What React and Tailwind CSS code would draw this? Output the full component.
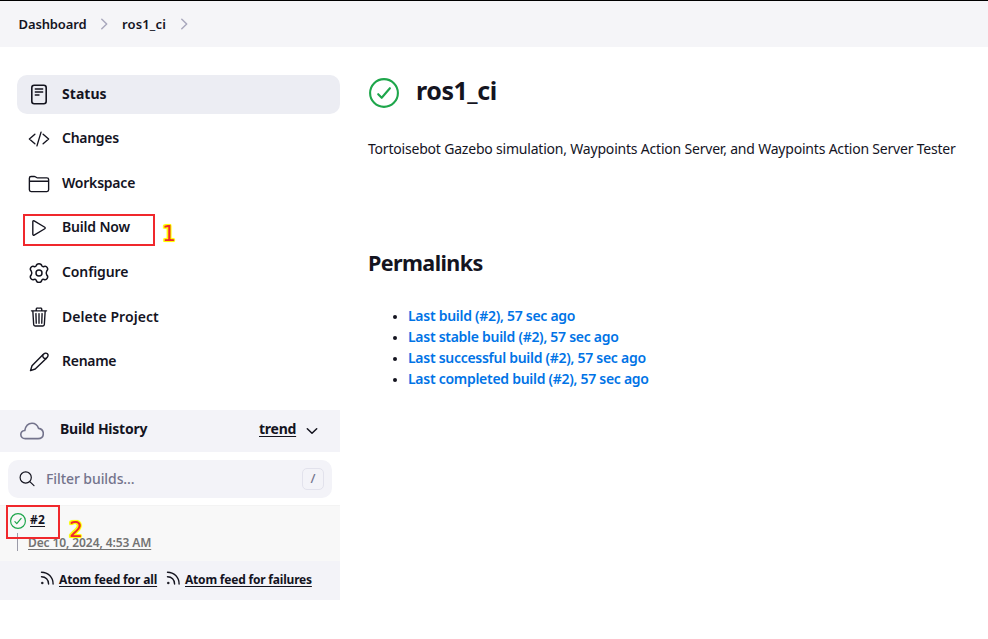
import React from "react";

const strokeProps = { fill: "none", stroke: "currentColor", strokeLinecap: "round", strokeLinejoin: "round" };

function Icon({ children, className = "w-[22px] h-[22px]", box = 512, sw = 32 }) {
  return (
    <svg viewBox={`0 0 ${box} ${box}`} className={`block shrink-0 ${className}`} {...strokeProps} strokeWidth={sw}>
      {children}
    </svg>
  );
}

const StatusIcon = () => (
  <Icon box={22} sw={1.6}>
    <rect x="3.800" y="1.300" width="14.400" height="18.400" rx="2.400" />
    <path d="M7.300 5h7.400M7.300 8h7.400M7.300 11h3.700" strokeWidth="1.400" />
  </Icon>
);
const CodeIcon = () => (
  <Icon>
    <path d="M160 368L32 256l128-112M352 368l128-112-128-112M304 96l-96 320" />
  </Icon>
);
const FolderIcon = () => (
  <Icon>
    <path d="M440 432H72a40 40 0 01-40-40V120a40 40 0 0140-40h75.89a40 40 0 0122.19 6.720l27.840 18.560a40 40 0 0022.190 6.720H440a40 40 0 0140 40v240a40 40 0 01-40 40zM32 192h448" />
  </Icon>
);
const PlayIcon = () => (
  <Icon>
    <path d="M112 111v290c0 17.440 17 28.520 31 20.160l247.900-148.370c12.120-7.250 12.120-26.330 0-33.580L143 90.840c-14-8.360-31 2.720-31 20.160z" />
  </Icon>
);
const GearIcon = () => (
  <Icon box={22} sw={1.45}>
    <circle cx="11" cy="11" r="3" />
    <path d="M8.200 3.900 C8.600 .9 13.400 .9 13.800 3.900 Q14.600 5 16 4.500 C18.800 3.500 21 7 18.700 9.100 Q17.700 11 18.700 12.900 C21 15 18.800 18.500 16 17.500 Q14.600 17 13.800 18.100 C13.400 21.100 8.600 21.100 8.200 18.100 Q7.400 17 6 17.500 C3.200 18.500 1 15 3.300 12.900 Q4.300 11 3.300 9.100 C1 7 3.200 3.500 6 4.500 Q7.400 5 8.200 3.900z" />
  </Icon>
);
const TrashIcon = () => (
  <Icon>
    <path d="M112 112l20 320c.95 18.490 14.400 32 32 32h184c17.670 0 30.870-13.510 32-32l20-320M80 112h352M192 112V72a23.930 23.930 0 0124-24h80a23.930 23.930 0 0124 24v40M256 176v224M184 176l8 224M328 176l-8 224" />
  </Icon>
);
const PencilIcon = () => (
  <Icon box={22} sw={1.45}>
    <path d="M2.500 19.600L4 14.800 14.600 4C16.300 2 18.100 1.600 19.400 2.800c1.200 1.200.8 2.900-1.200 4.600L7.200 18z" />
    <path d="M14.800 4.100c-.3 2.200 1 3.700 3.300 3.400" />
  </Icon>
);
const CheckCircle = ({ className, sw }) => (
  <Icon box={30} sw={sw} className={className}>
    <circle cx="15" cy="15" r="13.900" />
    <path d="M9.200 16.200l3.500 3.600 8.200-9.600" />
  </Icon>
);
const FeedIcon = () => (
  <Icon box={14} sw={1.4} className="w-[14px] h-[14px] mb-1">
    <path d="M1.500 1.200c6.600 0 11.600 5 11.600 11.800M1.500 5.700c4.200 0 7.100 2.900 7.100 7.300" />
    <circle cx="2.200" cy="12" r=".9" fill="currentColor" strokeWidth=".6" />
  </Icon>
);
const Crumb = () => (
  <Icon box={12} sw={1.5} className="w-3 h-3 text-[#a9a8bd]">
    <path d="M3.800 1.300L8.700 6 3.800 10.700" />
  </Icon>
);

const tasks = [
  { label: "Status", icon: StatusIcon, track: "tracking-[0.05px] font-bold", row: "bg-[#ecedf3]" },
  { label: "Changes", icon: CodeIcon, track: "tracking-[-0.28px] font-semibold" },
  { label: "Workspace", icon: FolderIcon, track: "tracking-[-0.22px] font-semibold" },
  { label: "Build Now", icon: PlayIcon, track: "tracking-[-0.18px] font-semibold", mark: true },
  { label: "Configure", icon: GearIcon, track: "tracking-[-0.12px] font-semibold" },
  { label: "Delete Project", icon: TrashIcon, track: "tracking-[0.05px] font-semibold" },
  { label: "Rename", icon: PencilIcon, track: "tracking-[-0.28px] font-semibold" },
];

const links = [
  "Last build (#2), 57 sec ago",
  "Last stable build (#2), 57 sec ago",
  "Last successful build (#2), 57 sec ago",
  "Last completed build (#2), 57 sec ago",
];

const glow = "[text-shadow:1px_0_#ff0,-1px_0_#ff0,0_1px_#ff0,0_-1px_#ff0,1px_1px_#ff0,-1px_-1px_#ff0,1px_-1px_#ff0,-1px_1px_#ff0,0_0_2px_#ff0,0_0_2px_#ff0] text-[#f0282c] font-['DejaVu_Sans',sans-serif] text-[22px] leading-[22px]";

export default function App() {
  return (
    <div className="w-[988px] h-[639px] overflow-hidden bg-white text-[#14141f] font-['Noto_Sans',sans-serif] text-[14px] whitespace-nowrap">
      <header className="h-[47px] border-t border-black bg-[#f5f5f8] flex items-center pl-[18.500px] text-[13px] font-semibold">
        <span className="w-[67.500px] mt-0.5 tracking-[-0.12px]">Dashboard</span>
        <span className="ml-3 w-6"><Crumb /></span>
        <span className="w-11 mt-0.5 tracking-[0.15px]">ros1_ci</span>
        <span className="ml-3"><Crumb /></span>
      </header>
      <div className="flex">
        <aside className="w-[340px] shrink-0 pt-7">
          <nav className="pl-[17px] flex flex-col gap-[5.6px]">
            {tasks.map(({ label, icon: Glyph, track, row = "", mark }) => (
              <div key={label} className={`relative h-[39px] rounded-[10px] flex items-center pl-[11px] ${row}`}>
                <Glyph />
                <span className={`ml-3 mb-[2.8px] ${track}`}>{label}</span>
                {mark && (
                  <>
                    <span className="absolute left-[6px] top-[5.500px] w-[132px] h-8 border-2 border-[#f0282c]" />
                    <span className={`absolute left-[145px] top-[14px] ${glow}`}>1</span>
                  </>
                )}
              </div>
            ))}
          </nav>

          <section className="mt-[28.400px]">
            <div className="h-[42px] bg-[#f3f3f8] flex items-center pl-5 pr-[22px]">
              <Icon box={24} sw={1.6} className="w-6 h-6 text-[#73738c]">
                <path d="M5.200 19.600C2.600 19.600 .8 18 .8 15.600c0-2.200 1.600-3.800 4-4.100C5.600 7 8.300 4.200 12 4.200c3.200 0 5.500 2 6.600 5.200 3 .5 4.700 2.500 4.700 5.100 0 3-2 5.100-5.200 5.100z" />
              </Icon>
              <span className="ml-4 mb-1 font-bold tracking-[-0.23px]">Build History</span>
              <span className="ml-auto mb-1 w-[37px] font-bold underline underline-offset-2 tracking-[-0.25px]">trend</span>
              <Icon box={12} sw={1.5} className="w-3 h-3 ml-2.5"><path d="M1.300 3.700l4.700 4.600 4.700-4.600" /></Icon>
            </div>
            <div className="h-[53px] px-2 pt-2">
              <div className="h-[38px] rounded-[10px] bg-[#f3f3f8] flex items-center pl-[11px] pr-2 text-[#73738c]">
                <Icon box={16} sw={1.2} className="w-4 h-4 text-[#14141f]">
                  <circle cx="6.700" cy="6.500" r="5.600" />
                  <path d="M10.800 10.600l4.200 4" />
                </Icon>
                <span className="ml-[11px] font-medium tracking-[-0.08px]">Filter builds...</span>
                <span className="ml-auto w-[22px] h-[22px] rounded-[5px] border border-[#e2e2ec] text-[13px] font-medium flex items-center justify-center">/</span>
              </div>
            </div>
            <div className="relative h-14 bg-[#f8f8f8] border-t border-[#f3f3f3] pt-[5px] text-[12px]">
              <div className="flex items-center h-5 pl-[10px]">
                <CheckCircle className="w-4 h-4 text-[#1ea64b]" sw={2.2} />
                <a className="ml-1 mb-0.5 font-bold tracking-[0.2px] underline underline-offset-2">#2</a>
              </div>
              <div className="flex items-center h-5 mt-0.5 pl-[17px]">
                <span className="w-px h-[18px] mb-0.5 bg-[#9b9ba8] mr-[10px]" />
                <a className="font-semibold tracking-[-0.1px] text-[#737373] underline underline-offset-2">Dec 10, 2024, 4:53 AM</a>
              </div>
              <span className="absolute left-[6px] top-[-1px] w-[54px] h-[34px] border-2 border-[#f0282c]" />
              <span className={`absolute left-[69px] top-[13px] ${glow}`}>2</span>
            </div>
            <div className="h-[39px] bg-[#f3f3f8] flex items-center pl-10 text-[12px] font-bold">
              <FeedIcon />
              <a className="ml-[5px] w-[98px] tracking-[-0.14px] underline underline-offset-2">Atom feed for all</a>
              <span className="ml-[9px]"><FeedIcon /></span>
              <a className="ml-[5px] tracking-[-0.2px] underline underline-offset-2">Atom feed for failures</a>
            </div>
          </section>
        </aside>
        <main className="pl-7 pt-[30px]">
          <div className="flex items-center h-8">
            <CheckCircle className="w-[30px] h-[30px] ml-px text-[#1ea64b]" sw={2.1} />
            <h1 className="ml-[17px] mb-1 text-[25px] font-bold tracking-[-0.45px]">ros1_ci</h1>
          </div>
          <p className="mt-[30px] leading-5 tracking-[-0.2px]">Tortoisebot Gazebo simulation, Waypoints Action Server, and Waypoints Action Server Tester</p>
          <h2 className="mt-[88px] leading-8 text-[21.500px] font-bold tracking-[-0.6px]">Permalinks</h2>
          <ul className="mt-[26px] pl-[25px] leading-[21px]">
            {links.map((label) => (
              <li key={label} className="flex items-center">
                <span className="w-1 h-1 mt-[3px] mr-[11px] rounded-full bg-[#14141f]" />
                <a className="text-[#0073e6] font-semibold tracking-[-0.28px]">{label}</a>
              </li>
            ))}
          </ul>
        </main>
      </div>
    </div>
  );
}
